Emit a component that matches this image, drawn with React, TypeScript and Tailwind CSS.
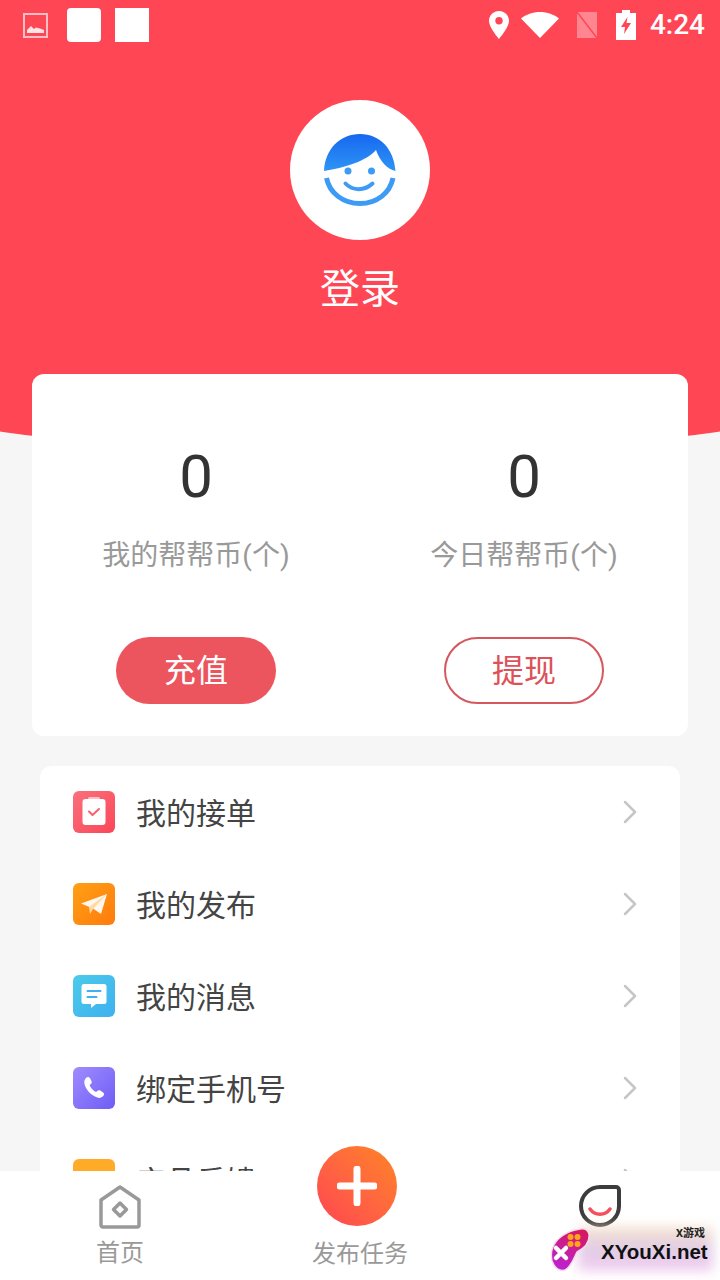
import { ChevronRight } from 'lucide-react';

const CJK = 'font-["Roboto","Noto_Sans_CJK_SC",sans-serif]';

const MENU = [
  { label: '我的接单', icon: 'clip', bg: 'bg-gradient-to-br from-[#f9707c] to-[#fb4458]' },
  { label: '我的发布', icon: 'plane', bg: 'bg-gradient-to-br from-[#ffa015] to-[#ff7a0c]' },
  { label: '我的消息', icon: 'chat', bg: 'bg-gradient-to-br from-[#4bcbe9] to-[#3fb0f0]' },
  { label: '绑定手机号', icon: 'phone', bg: 'bg-gradient-to-br from-[#a08cff] to-[#6f5bf5]' },
  { label: '产品反馈', icon: 'none', bg: 'bg-[#ffab27]' },
];

function MenuIcon({ type }: { type: string }) {
  if (type === 'clip')
    return (
      <svg viewBox="0 0 42 42" className="w-[42px] h-[42px]">
        <rect x="9.500" y="8" width="23" height="26" rx="3" fill="#fff" />
        <rect x="15" y="6" width="12" height="4" rx="1.500" fill="#fff" fillOpacity="0.6" />
        <path d="M16 20.500l3.500 3.500 6.500-6" fill="none" stroke="#f8606e" strokeWidth="2" strokeLinecap="round" strokeLinejoin="round" />
      </svg>
    );
  if (type === 'plane')
    return (
      <svg viewBox="0 0 42 42" className="w-[42px] h-[42px]">
        <path d="M8 20.500L34 11 28 31l-8-5.500z" fill="#fff" fillOpacity="0.92" />
        <path d="M16 24l18-13-14 15-3 5z" fill="#ffd9a8" />
      </svg>
    );
  if (type === 'chat')
    return (
      <svg viewBox="0 0 42 42" className="w-[42px] h-[42px]">
        <path d="M11 9h20a2.500 2.500 0 0 1 2.500 2.500v15a2.500 2.500 0 0 1-2.500 2.500H23l-5 4v-4h-7a2.500 2.500 0 0 1-2.500-2.500v-15A2.500 2.500 0 0 1 11 9z" fill="#fff" />
        <path d="M14.500 16h13" stroke="#3fb0f0" strokeWidth="2" strokeLinecap="round" />
        <path d="M14.500 22h9" stroke="#3fb0f0" strokeWidth="2" strokeLinecap="round" />
      </svg>
    );
  if (type === 'phone')
    return (
      <svg viewBox="0 0 42 42" className="w-[42px] h-[42px]">
        <path d="M13.500 10.500c1.500-1 3-.5 3.700 1l1.300 2.700c.5 1 .2 2-.6 2.700l-1.400 1.200c1 2.800 3.500 5.500 6.500 7l1.500-1.300c.8-.7 1.800-.8 2.700-.2l2.600 1.600c1.400.9 1.700 2.400.6 3.600-1.600 1.800-3.700 2.600-6 1.800-6.500-2.300-11.800-7.800-13-14-.4-2.500.4-4.600 2.100-6.100z" fill="#fff" />
      </svg>
    );
  return null;
}

function StatusBar() {
  return (
    <div className="h-[50px] shrink-0 flex items-center pl-[23px] pr-[15px] text-white">
      <svg viewBox="0 0 25 25" className="w-[25px] h-[25px]">
        <rect x="1" y="1" width="23" height="23" fill="none" stroke="#fff" strokeOpacity="0.65" strokeWidth="2" />
        <path d="M4 20v-3l4-4 3 3 2-1.500 4 1 4 1.500v3z" fill="#fff" fillOpacity="0.85" />
      </svg>
      <div className="w-[34px] h-[34px] ml-[19px] bg-white rounded-[4px]" />
      <div className="w-[34px] h-[34px] ml-[14px] bg-white" />
      <div className="flex-1" />
      <svg viewBox="0 0 20 28" className="w-[20px] h-[28px]">
        <path fillRule="evenodd" d="M10 0C4.500 0 0 4.300 0 9.800 0 16.500 10 28 10 28s10-11.500 10-18.200C20 4.300 15.500 0 10 0zm0 13.500a3.700 3.700 0 1 1 0-7.400 3.700 3.700 0 0 1 0 7.400z" fill="#fff" />
      </svg>
      <svg viewBox="0 0 38 26" className="w-[38px] h-[26px] ml-[12px]">
        <path d="M19 26L0 6.500C5 2.400 11.700 0 19 0s14 2.400 19 6.500z" fill="#fff" />
      </svg>
      <svg viewBox="0 0 20 26" className="w-[20px] h-[26px] ml-[18px]">
        <path d="M0 0h20v26H0z" fill="#fff" fillOpacity="0.35" />
        <path d="M0 0l20 26" stroke="#ff4655" strokeWidth="1.500" />
      </svg>
      <svg viewBox="0 0 20 30" className="w-[20px] h-[30px] ml-[19px]">
        <path fillRule="evenodd" d="M6 0h8v3h6v27H0V3h6zm5.500 7L5 17h4l-1 7 7-11h-4.500z" fill="#fff" />
      </svg>
      <span className='ml-[14px] text-[28px] leading-none font-medium font-["Roboto",sans-serif]'>4:24</span>
    </div>
  );
}

function Avatar() {
  return (
    <div className="w-[140px] h-[140px] rounded-full bg-white flex items-center justify-center">
      <svg viewBox="0 0 72 72" className="w-[72px] h-[72px]">
        <defs>
          <linearGradient id="hair" x1="0" y1="0" x2="0" y2="1">
            <stop offset="0" stopColor="#1668f0" />
            <stop offset="1" stopColor="#2f94f5" />
          </linearGradient>
        </defs>
        <path d="M0 37C1 15 16 0 36 0s34 15 35.500 37C63 35 56 27 52 16 45 24 30 32 0 37z" fill="url(#hair)" />
        <circle cx="24" cy="37" r="3.500" fill="#3d9bf5" />
        <circle cx="47.500" cy="37" r="3.500" fill="#3d9bf5" />
        <path d="M21.500 49.500c7 7.500 19 7.500 27 0" fill="none" stroke="#3d9bf5" strokeWidth="4" strokeLinecap="round" />
        <path d="M2.500 44c3 15 16.500 25.500 33.500 25.500S66 59 69 44" fill="none" stroke="#3d9bf5" strokeWidth="5" />
      </svg>
    </div>
  );
}

function Stat({ value, label, button, filled }: { value: string; label: string; button: string; filled?: boolean }) {
  return (
    <div className="flex flex-col items-center w-[328px]">
      <div className='h-[70px] text-[60px] leading-[70px] text-[#333] font-["Roboto",sans-serif]'>{value}</div>
      <div className="mt-[24px] h-[40px] text-[28px] leading-[40px] text-[#999]">{label}</div>
      <div
        className={
          filled
            ? 'mt-[61px] w-[160px] h-[67px] rounded-full bg-[#ec555e] text-white flex items-center justify-center text-[32px]'
            : 'mt-[61px] w-[160px] h-[67px] rounded-full border-2 border-[#d4585e] text-[#dd5159] flex items-center justify-center text-[32px]'
        }
      >
        {button}
      </div>
    </div>
  );
}

export default function App() {
  return (
    <div className={`relative w-[720px] h-[1280px] overflow-hidden bg-[#f6f6f6] flex flex-col ${CJK}`}>
      {/* curved red backdrop */}
      <div className="absolute top-0 left-[-140px] w-[1000px] h-[453px] bg-[#ff4655] rounded-b-[50%_70px]" />

      <div className="relative flex-1 min-h-0 flex flex-col overflow-hidden">
        <StatusBar />

        <div className="shrink-0 flex flex-col items-center mt-[50px]">
          <Avatar />
          <div className="mt-[25px] h-[50px] text-[40px] leading-[50px] text-white">登录</div>
        </div>

        <div className="mx-[32px] mt-[59px] h-[362px] shrink-0 bg-white rounded-[12px] pt-[68px] flex">
          <Stat value="0" label="我的帮帮币(个)" button="充值" filled />
          <Stat value="0" label="今日帮帮币(个)" button="提现" />
        </div>

        <div className="mx-[40px] mt-[30px] shrink-0 bg-white rounded-[12px] pl-[33px] pr-[30px]">
          {MENU.map(m => (
            <div key={m.label} className="h-[92px] flex items-center">
              <div className={`w-[42px] h-[42px] rounded-[6px] ${m.bg}`}>
                <MenuIcon type={m.icon} />
              </div>
              <span className="ml-[21px] pt-[2px] text-[30px] text-[#444]">{m.label}</span>
              <ChevronRight className="ml-auto text-[#c6c6c6]" size={40} strokeWidth={1.500} />
            </div>
          ))}
        </div>
      </div>

      {/* bottom tab bar */}
      <div className="relative h-[109px] shrink-0 bg-white grid grid-cols-3">
        <div className="flex flex-col items-center pt-[14px]">
          <svg viewBox="0 0 42 44" className="w-[42px] h-[44px] shrink-0">
            <path d="M21 2L40 15v25a2 2 0 0 1-2 2H4a2 2 0 0 1-2-2V15z" fill="none" stroke="#999" strokeWidth="3.500" strokeLinejoin="round" />
            <path d="M21 18l6.500 6.500L21 31l-6.500-6.500z" fill="none" stroke="#999" strokeWidth="3.500" strokeLinejoin="round" />
          </svg>
          <span className="mt-[8px] text-[24px] leading-[32px] text-[#999]">首页</span>
        </div>
        <div className="flex flex-col items-center justify-end pb-[10px]">
          <span className="text-[24px] leading-[32px] text-[#999]">发布任务</span>
        </div>
        <div className="flex flex-col items-center pt-[14px]">
          <svg viewBox="0 0 42 42" className="w-[42px] h-[42px] shrink-0">
            <path d="M21 2h16a3 3 0 0 1 3 3v16A19 19 0 1 1 21 2z" fill="none" stroke="#3c3c3c" strokeWidth="4" />
            <path d="M11 24c5 7 15 7 20 0" fill="none" stroke="#f4505e" strokeWidth="3.500" strokeLinecap="round" />
          </svg>
        </div>
      </div>

      {/* floating publish button */}
      <div className="absolute left-[317px] top-[1146px] w-[80px] h-[80px] rounded-full bg-gradient-to-tr from-[#ff4250] to-[#ff8320] flex items-center justify-center">
        <svg viewBox="0 0 40 40" className="w-[40px] h-[40px]">
          <path d="M20 3v34M3 20h34" stroke="#fff" strokeWidth="7" strokeLinecap="round" />
        </svg>
      </div>

      {/* watermark */}
      <div className="absolute left-[550px] top-[1225px] w-[170px] h-[55px]">
        <div className="absolute left-[28px] top-[2px] w-[135px] h-[44px] blur-[6px] bg-gradient-to-b from-[#f3dcc0] via-[#d9c0e0] to-[#eec0ee] opacity-80" />
        <svg viewBox="0 0 44 46" className="absolute left-[0px] top-[2px] w-[44px] h-[46px]">
          <defs>
            <linearGradient id="pad" x1="0.700" y1="0" x2="0.300" y2="1">
              <stop offset="0" stopColor="#d6185f" />
              <stop offset="1" stopColor="#bd22d4" />
            </linearGradient>
          </defs>
          <path d="M3 20C6 12 16 4 30 2c5-1 8 1 9 5 1 8-4 14-12 18-3 6-6 15-12 18-6 2-11-3-13-9-1-5-1-10 1-14z" fill="url(#pad)" stroke="#f8dcea" strokeWidth="1.500" />
          <path d="M6 21l10 10M16 21L6 31" stroke="#fff" strokeWidth="4.500" strokeLinecap="round" />
          <circle cx="20.500" cy="10" r="3" fill="#ffa41c" />
          <circle cx="27.500" cy="10" r="3" fill="#ffa41c" />
          <circle cx="20.500" cy="17" r="3" fill="#ffa41c" />
          <circle cx="27.500" cy="17" r="3" fill="#ffa41c" />
        </svg>
        <span className='absolute left-[51px] top-[13px] text-[20.500px] leading-[28px] text-[#111] font-bold font-["Liberation_Sans",sans-serif] whitespace-nowrap'>XYouXi.net</span>
        <span className="absolute left-[126px] top-[2px] text-[11px] leading-[14px] font-bold text-[#222] whitespace-nowrap">X游戏</span>
      </div>
    </div>
  );
}
